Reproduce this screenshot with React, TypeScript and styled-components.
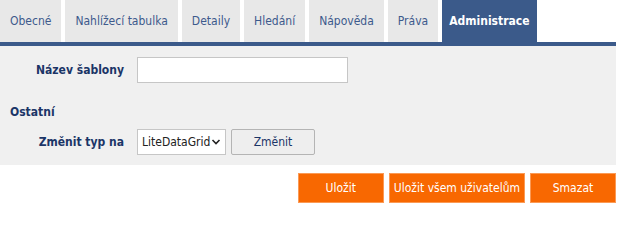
import React from "react";
import styled, { createGlobalStyle } from "styled-components";

const Global = createGlobalStyle`
  html, body { margin: 0; padding: 0; background: #ffffff; }
  body { font-family: "DejaVu Sans Condensed", "DejaVu Sans", sans-serif; font-size: 12px; }
  * { box-sizing: border-box; }
`;

const Page = styled.div`
  width: 616px;
  display: flex;
  flex-direction: column;
`;

const TabBar = styled.div`
  display: flex;
  gap: 4px;
  height: 46px;
  border-bottom: 4px solid #3b5a8a;
`;

const Tab = styled.div<{ $active?: boolean }>`
  height: 42px;
  padding: 0 ${(p) => (p.$active ? "7px" : "10px")};
  display: flex;
  align-items: center;
  background: ${(p) => (p.$active ? "#3b5a8a" : "#e8e8e8")};
  color: ${(p) => (p.$active ? "#ffffff" : "#3d5a8c")};
  font-weight: ${(p) => (p.$active ? "bold" : "normal")};
  font-size: 12px;
  white-space: nowrap;
`;

const Panel = styled.div`
  background: #f0f0f0;
  padding: 11px 0 10px 0;
  height: 119px;
  display: flex;
  flex-direction: column;
`;

const Row = styled.div`
  display: flex;
  align-items: center;
  gap: 13px;
  height: 26px;
`;

const Label = styled.div`
  width: 124px;
  text-align: right;
  font-weight: bold;
  color: #1b3567;
  font-size: 12px;
`;

const SectionTitle = styled.div`
  padding-left: 10px;
  font-weight: bold;
  color: #1b3567;
  font-size: 12px;
  margin: 22px 0 10px;
  height: 14px;
  line-height: 14px;
`;

const TextInput = styled.input`
  width: 211px;
  height: 26px;
  border: 1px solid #c6c6c6;
  background: #fff;
  padding: 0 4px;
  font: inherit;
`;

const Controls = styled.div`
  display: flex;
  gap: 5px;
  align-items: center;
`;

const Select = styled.div`
  width: 89px;
  height: 26px;
  border: 1px solid #c6c6c6;
  background: #fff;
  display: flex;
  align-items: center;
  justify-content: space-between;
  padding: 0 4px 0 4px;
  color: #222;
  font-size: 12px;
`;

const PlainButton = styled.button`
  width: 84px;
  height: 26px;
  border: 1px solid #b4b4b4;
  border-radius: 2px;
  background: #eeeeee;
  color: #1b3567;
  font: inherit;
  font-size: 12px;
`;

const Footer = styled.div`
  display: flex;
  justify-content: flex-end;
  gap: 5px;
  padding: 8px 0 0 0;
`;

const ActionButton = styled.button`
  height: 30px;
  padding: 0 4px;
  min-width: 86px;
  border: 1px solid #fb9a55;
  background: #f86801;
  color: #ffffff;
  font: inherit;
  font-size: 12px;
`;

const tabs = ["Obecné", "Nahlížecí tabulka", "Detaily", "Hledání", "Nápověda", "Práva", "Administrace"];

export default function App() {
  return (
    <Page>
      <Global />
      <TabBar>
        {tabs.map((t) => (
          <Tab key={t} $active={t === "Administrace"}>
            {t}
          </Tab>
        ))}
      </TabBar>
      <Panel>
        <Row>
          <Label>Název šablony</Label>
          <TextInput />
        </Row>
        <SectionTitle>Ostatní</SectionTitle>
        <Row>
          <Label>Změnit typ na</Label>
          <Controls>
            <Select>
              <span>LiteDataGrid</span>
              <svg width="10" height="8" viewBox="0 0 10 8">
                <path d="M1.5 2 L5 5.5 L8.5 2" fill="none" stroke="#222" strokeWidth="1.6" />
              </svg>
            </Select>
            <PlainButton>Změnit</PlainButton>
          </Controls>
        </Row>
      </Panel>
      <Footer>
        <ActionButton>Uložit</ActionButton>
        <ActionButton>Uložit všem uživatelům</ActionButton>
        <ActionButton>Smazat</ActionButton>
      </Footer>
    </Page>
  );
}
